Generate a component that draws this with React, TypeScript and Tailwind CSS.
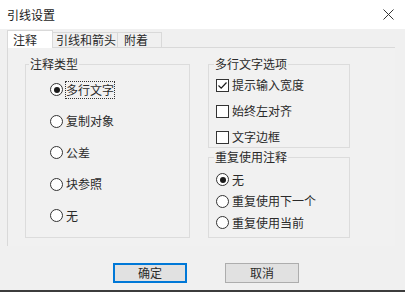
import React from "react"

function Radio({ checked }: { checked?: boolean }) {
  return (
    <span className="flex h-[13px] w-[13px] shrink-0 items-center justify-center rounded-full border border-[#333] bg-white">
      {checked && <span className="h-[6px] w-[6px] rounded-full bg-[#1a1a1a]" />}
    </span>
  )
}

function Checkbox({ checked }: { checked?: boolean }) {
  return (
    <span className="flex h-[13px] w-[13px] shrink-0 items-center justify-center border border-[#333] bg-white">
      {checked && (
        <svg width="11" height="11" viewBox="0 0 11 11" fill="none" aria-hidden>
          <path d="M1.5 5.5 L4.2 8.2 L9.5 2.5" stroke="#1a1a1a" strokeWidth="1.2" />
        </svg>
      )}
    </span>
  )
}

const leftOptions = ["多行文字", "复制对象", "公差", "块参照", "无"]
const mtextOptions = [
  { label: "提示输入宽度", checked: true },
  { label: "始终左对齐", checked: false },
  { label: "文字边框", checked: false },
]
const reuseOptions = ["无", "重复使用下一个", "重复使用当前"]

export default function App() {
  return (
    <div className="flex h-[292px] w-[405px] flex-col overflow-hidden bg-[#f0f0f0] font-['Noto_Sans_CJK_SC',sans-serif] text-[12px] leading-[16px] text-[#2a2a2a]">
      {/* title bar */}
      <div className="flex h-[29px] shrink-0 items-center justify-between bg-white pl-[7px] pr-[11px] text-[#1a1a1a]">
        <span>引线设置</span>
        <svg width="11" height="11" viewBox="0 0 11 11" aria-hidden>
          <path d="M0.5 0.5 L10.5 10.5 M10.5 0.5 L0.5 10.5" stroke="#333" strokeWidth="1" />
        </svg>
      </div>

      {/* tabs */}
      <div className="mt-[2px] flex h-[16px] items-end pl-[7px]">
        <div className="relative z-10 -mb-px flex h-[18px] w-[46px] items-center border border-b-0 border-[#d9d9d9] bg-white pl-[5px]">
          注释
        </div>
        <div className="flex h-[15px] w-[65px] items-center border border-b-0 border-l-0 border-[#d9d9d9] bg-[#f0f0f0] pl-[3px]">
          引线和箭头
        </div>
        <div className="flex h-[15px] w-[44px] items-center border border-b-0 border-l-0 border-[#d9d9d9] bg-[#f0f0f0] pl-[6px]">
          附着
        </div>
      </div>

      {/* tab page */}
      <div className="ml-[7px] flex h-[199px] w-[388px] gap-[18px] border-l border-t border-[#d9d9d9] bg-[#f1f1f1] pl-[17px] pt-[8px]">
        <fieldset className="h-[182px] w-[165px] border border-[#dcdcdc]">
          <legend className="ml-[3px] px-[1px]">注释类型</legend>
          <div className="flex flex-col pl-[24px] pt-[2px]">
            {leftOptions.map((o, i) => (
              <div key={o} className="flex h-[31.5px] items-center gap-[3px]">
                <Radio checked={i === 0} />
                <span className={i === 0 ? "-ml-px border border-dotted border-[#333]" : ""}>{o}</span>
              </div>
            ))}
          </div>
        </fieldset>

        <div className="flex flex-col gap-px">
          <fieldset className="h-[92px] w-[142px] border border-[#dcdcdc]">
            <legend className="ml-[5px] px-[1px]">多行文字选项</legend>
            <div className="flex flex-col gap-[4px] pl-[7px] pt-[2px]">
              {mtextOptions.map((o) => (
                <div key={o.label} className="flex h-[22px] items-center gap-[3px]">
                  <Checkbox checked={o.checked} />
                  <span>{o.label}</span>
                </div>
              ))}
            </div>
          </fieldset>

          <fieldset className="h-[89px] w-[142px] border border-[#dcdcdc]">
            <legend className="ml-[5px] px-[1px]">重复使用注释</legend>
            <div className="flex flex-col pl-[7px] pt-[4px]">
              {reuseOptions.map((o, i) => (
                <div key={o} className="flex h-[21.5px] items-center gap-[3px]">
                  <Radio checked={i === 0} />
                  <span>{o}</span>
                </div>
              ))}
            </div>
          </fieldset>
        </div>
      </div>

      {/* buttons */}
      <div className="mt-[17px] flex gap-[38px] pl-[113px]">
        <button className="flex h-[20px] w-[74px] items-center justify-center border-2 border-[#0078d7] bg-[#e1e1e1]">
          确定
        </button>
        <button className="flex h-[20px] w-[74px] items-center justify-center border border-[#adadad] bg-[#e1e1e1]">
          取消
        </button>
      </div>

      <div className="mt-auto h-[2px] shrink-0 bg-[#3c3c3c]" />
    </div>
  )
}
